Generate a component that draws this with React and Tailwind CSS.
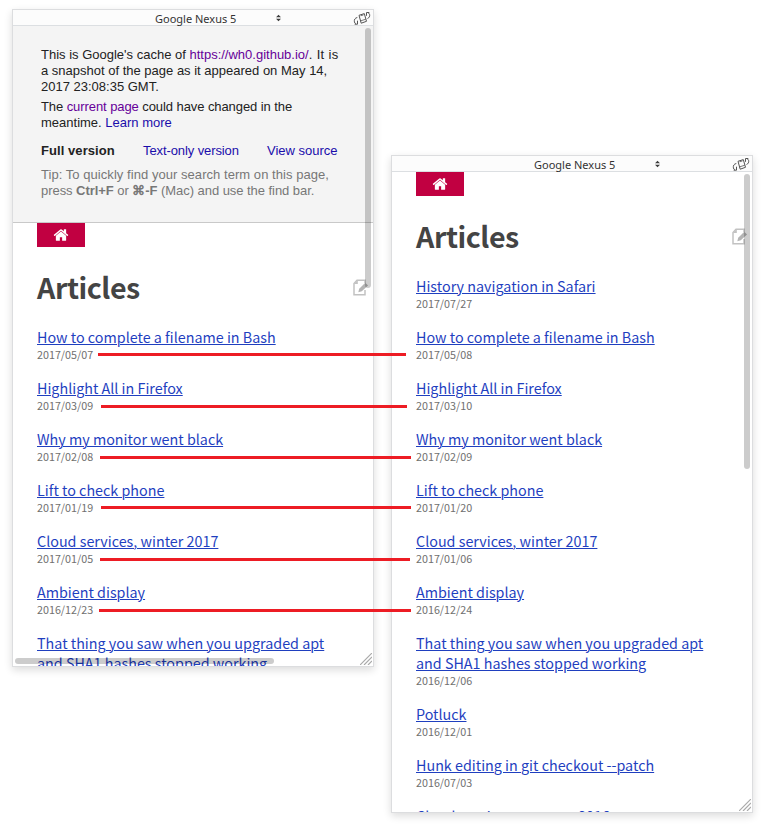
const ARTICLES = [
  ['How to complete a filename in Bash', '2017/05/07', '2017/05/08'],
  ['Highlight All in Firefox', '2017/03/09', '2017/03/10'],
  ['Why my monitor went black', '2017/02/08', '2017/02/09'],
  ['Lift to check phone', '2017/01/19', '2017/01/20'],
  ['Cloud services, winter 2017', '2017/01/05', '2017/01/06'],
  ['Ambient display', '2016/12/23', '2016/12/24'],
];

const SHA1 = 'That thing you saw when you upgraded apt and SHA1 hashes stopped working';

const cached = [
  ...ARTICLES.map(([title, date]) => ({ title, date })),
  { title: SHA1 },
];
const live = [
  { title: 'History navigation in Safari', date: '2017/07/27' },
  ...ARTICLES.map(([title, , date]) => ({ title, date })),
  { title: SHA1, date: '2016/12/06' },
  { title: 'Potluck', date: '2016/12/01' },
  { title: 'Hunk editing in git checkout --patch', date: '2016/07/03' },
  { title: 'Cloud services, summer 2016' },
];

function RotateIcon() {
  return (
    <svg className="h-[16px] w-[18px]" viewBox="0 0 18 16" fill="none" stroke="#555" strokeWidth="1">
      <path d="M6 4.300 11.300 2.600 13.500 10.300 8.200 12.200Z" />
      <path d="M7.200 10 12.800 8.200M7.700 4.800 10.500 3.900" strokeWidth="0.8" />
      <path d="M4.300 6.500C2 6.900 1 8.700 1.400 10.900c.2 1 .7 1.600 1.500 2.100M4.500 9.700v3.500H1.700" />
      <path d="M14.500 7.500c1.800-.7 2.500-2.300 2.100-4.100-.2-.8-.7-1.300-1.500-1.700M13.500 4.800V1.500h2.800" />
    </svg>
  );
}

function HomeIcon() {
  return (
    <svg className="h-[16px] w-[16px]" viewBox="0 0 1792 1792" fill="#fff">
      <path d="M1472 992v480q0 26-19 45t-45 19h-384v-384h-256v384h-384q-26 0-45-19t-19-45v-480q0-1 .5-3t.5-3l575-474 575 474q1 2 1 6zm223-69l-62 74q-8 9-21 11h-3q-13 0-21-7l-692-577-692 577q-12 8-24 7-13-2-21-11l-62-74q-8-10-7-23.500t11-21.500l719-599q32-26 76-26t76 26l244 204v-195q0-14 9-23t23-9h192q14 0 23 9t9 23v408l219 182q10 8 11 21.500t-7 23.500z" />
    </svg>
  );
}

function EditIcon() {
  return (
    <svg className="h-[17px] w-[16px]" viewBox="0 0 16 17" fill="none">
      <path d="M12 11V15.800H1V4.500L4 1.200H12V4" stroke="#c2c2c2" strokeWidth="1.500" />
      <path d="M1 5H4.800V1.200Z" fill="#c2c2c2" />
      <path d="M5.300 13.200 6.200 9.800 12.300 3.700 15 6.400 8.800 12.300Z" fill="#b4b4b4" />
    </svg>
  );
}

function CacheNotice() {
  return (
    <div className="h-[197px] border-b border-[#c9c9c9] bg-[#f4f4f4] pt-[21px] pl-[28px] font-['Liberation_Sans',Arial,sans-serif] text-[13px] leading-4 whitespace-nowrap text-[#222]">
      <p>
        This is Google's cache of <a className="text-[#660099]">https://wh0.github.io/</a><span className="tracking-[0.35px]">. It is</span>
        <br />a snapshot of the page as it appeared on May 14,
        <br />
        2017 23:08:35 GMT.
      </p>
      <p className="mt-1">
        <span className="tracking-[-0.08px]">
          The <a className="text-[#660099]">current page</a> could have changed in the
        </span>
        <br />
        meantime. <a className="text-[#1a0dab]">Learn more</a>
      </p>
      <div className="mt-3 flex">
        <b className="w-[102px] tracking-[0.07px]">Full version</b>
        <a className="w-[124px] tracking-[-0.1px] text-[#1a0dab]">Text-only version</a>
        <a className="text-[#1a0dab]">View source</a>
      </div>
      <p className="mt-2 text-[#777]">
        <span className="tracking-[0.05px]">Tip: To quickly find your search term on this page,</span>
        <br />
        <span className="tracking-[-0.05px]">
          press <b>Ctrl+F</b> or <b>⌘-F</b> (Mac) and use the find bar.
        </span>
      </p>
    </div>
  );
}

function Phone({ articles, notice, thumb, horizontal }) {
  return (
    <section className="relative flex h-[658px] w-[362px] shrink-0 flex-col overflow-hidden border border-[#dcdddf] bg-white">
      <header className="flex h-[16px] shrink-0 items-center border-b border-[#dcdfe2] bg-[#fcfcfc] font-['Noto_Sans',sans-serif] text-[11px] leading-[15px] text-[#333]">
        <span className="mt-[2px] box-content w-[121px] pl-[142px] whitespace-nowrap">Google Nexus 5</span>
        <svg className="h-[8px] w-[5px]" viewBox="0 0 6 8" fill="#3c3c3c">
          <path d="M3 0 6 3H0ZM3 8 0 5H6Z" />
        </svg>
        <span className="mt-[2px] mr-[2px] ml-auto"><RotateIcon /></span>
      </header>
      <div className="min-h-0 flex-1 overflow-hidden">
        {notice && <CacheNotice />}
        <div className="px-6 font-['Noto_Sans_CJK_SC',sans-serif]">
          <div className="flex h-6 w-12 items-center justify-center bg-[#c10041]"><HomeIcon /></div>
          <div className="-mr-6 mt-[20px] flex h-10 items-center justify-between pr-[4px]">
            <h1 className="text-[28.600px] leading-10 font-bold tracking-[-0.45px] text-[#444]">Articles</h1>
            <EditIcon />
          </div>
          <ul className="mt-[20px]">
            {articles.map(({ title, date }) => (
              <li key={title} className="mb-[16px]">
                <a className="block w-[300px] text-[14.330px] leading-5 text-[#1f3fbf] underline decoration-1 underline-offset-1">{title}</a>
                {date && <time className="mt-px block text-[10.750px] leading-[14px] text-[#707070]">{date}</time>}
              </li>
            ))}
          </ul>
        </div>
      </div>
      <div className={`absolute top-[18px] right-[2px] w-[6px] rounded-full bg-black/20 ${thumb}`} />
      {horizontal && <div className="absolute bottom-[2px] left-[2px] h-[6px] w-[259px] rounded-full bg-black/20" />}
      <svg className="absolute right-[1px] bottom-[1px] h-[12px] w-[12px]" viewBox="0 0 12 12" stroke="#aaa" strokeWidth="1.200">
        <path d="M0 12 12 0M4 12 12 4M8 12 12 8" />
      </svg>
    </section>
  );
}

export default function App() {
  return (
    <main className="relative flex h-[837px] w-[768px] gap-[17px] overflow-hidden bg-white pt-[9px] pl-[12px]">
      <div className="h-[658px] shadow-[0_3px_8px_rgba(0,0,0,0.14)]">
        <Phone articles={cached} notice horizontal thumb="h-[260px]" />
      </div>
      <div className="mt-[146px] h-[658px] shadow-[0_3px_8px_rgba(0,0,0,0.14)]">
        <Phone articles={live} thumb="h-[295px]" />
      </div>
      <i className="absolute top-[353px] left-[98px] h-[3px] w-[308px] bg-[#ed1c24]" />
      <i className="absolute top-[405px] left-[101px] h-[3px] w-[306px] bg-[#ed1c24]" />
      <i className="absolute top-[456px] left-[100px] h-[3px] w-[311px] bg-[#ed1c24]" />
      <i className="absolute top-[506px] left-[101px] h-[3px] w-[310px] bg-[#ed1c24]" />
      <i className="absolute top-[558px] left-[100px] h-[3px] w-[310px] bg-[#ed1c24]" />
      <i className="absolute top-[609px] left-[99px] h-[3px] w-[312px] bg-[#ed1c24]" />
    </main>
  );
}
